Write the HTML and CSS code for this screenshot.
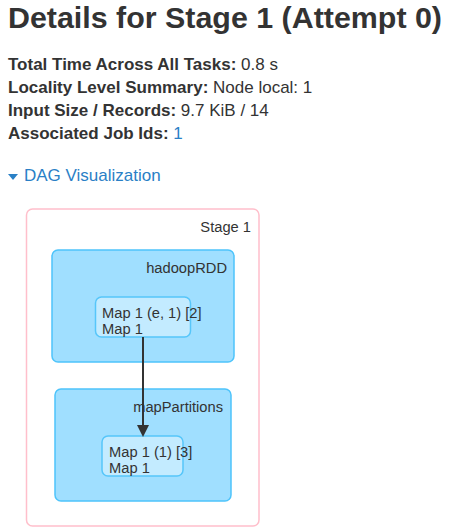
FILE: index.html
```html
<!DOCTYPE html>
<html>
<head>
<meta charset="utf-8">
<link rel="stylesheet" href="styles.css">
</head>
<body>
<h3 class="title">Details for Stage 1 (Attempt 0)</h3>
<ul class="summary">
  <li><strong>Total Time Across All Tasks:</strong> 0.8 s</li>
  <li><strong>Locality Level Summary:</strong> Node local: 1</li>
  <li><strong>Input Size / Records:</strong> 9.7 KiB / 14</li>
  <li><strong>Associated Job Ids:</strong> <a class="link" href="#">1</a></li>
</ul>
<div class="dag-toggle"><span class="arrow-open"></span><a class="link" href="#">DAG Visualization</a></div>
<svg class="dag" width="270" height="330" viewBox="8 200 270 330" xmlns="http://www.w3.org/2000/svg">
  <rect class="stage-box" x="26.5" y="209" width="232.5" height="317" rx="6"/>
  <text class="cluster-label" x="251" y="232" text-anchor="end">Stage 1</text>

  <rect class="cluster" x="52" y="250" width="182" height="112" rx="6"/>
  <text class="cluster-label" x="227" y="273" text-anchor="end">hadoopRDD</text>
  <rect class="node" x="95.5" y="297" width="95" height="40" rx="6"/>
  <text class="node-text" x="102" y="318">Map 1 (e, 1) [2]</text>
  <text class="node-text" x="102" y="334">Map 1</text>

  <rect class="cluster" x="55" y="389" width="176" height="112" rx="6"/>
  <text class="cluster-label" x="223" y="412" text-anchor="end">mapPartitions</text>
  <rect class="node" x="102" y="436" width="81" height="40" rx="6"/>
  <text class="node-text" x="109" y="457">Map 1 (1) [3]</text>
  <text class="node-text" x="109" y="473">Map 1</text>

  <line class="edge" x1="143" y1="337" x2="143" y2="427"/>
  <polygon class="edge-head" points="137,425 149,425 143,437"/>
</svg>
</body>
</html>
```
FILE: styles.css
```css
html, body {
  margin: 0;
  padding: 0;
  background: #ffffff;
}
body {
  padding: 0 8px;
  font-family: "Liberation Sans", Arial, sans-serif;
  color: #333333;
  font-size: 17px;
  line-height: 23px;
}
.title {
  margin: 0;
  font-size: 30.4px;
  line-height: 34px;
  font-weight: bold;
  color: #333333;
}
.summary {
  list-style: none;
  margin: 19px 0 0 0;
  padding: 0;
}
.summary li {
  height: 23px;
}
.summary strong {
  font-weight: bold;
}
.link {
  color: #2a80c6;
  text-decoration: none;
}
.dag-toggle {
  margin-top: 19px;
  display: flex;
  align-items: center;
  height: 23px;
}
.arrow-open {
  display: inline-block;
  width: 0;
  height: 0;
  border-left: 5.5px solid transparent;
  border-right: 5.5px solid transparent;
  border-top: 6px solid #2a80c6;
  margin-right: 6px;
  margin-top: 2px;
}
.dag {
  display: block;
  margin-top: 13px;
}
.stage-box {
  fill: #ffffff;
  stroke: #ffbfcb;
  stroke-width: 1.5;
}
.cluster {
  fill: #a0dfff;
  stroke: #4ec4fb;
  stroke-width: 1.5;
}
.node {
  fill: #c3ebff;
  stroke: #56c6fa;
  stroke-width: 1.5;
}
.cluster-label, .node-text {
  font-family: "Liberation Sans", Arial, sans-serif;
  font-size: 14.7px;
  fill: #333333;
}
.edge {
  stroke: #333333;
  stroke-width: 2;
}
.edge-head {
  fill: #333333;
}
```
